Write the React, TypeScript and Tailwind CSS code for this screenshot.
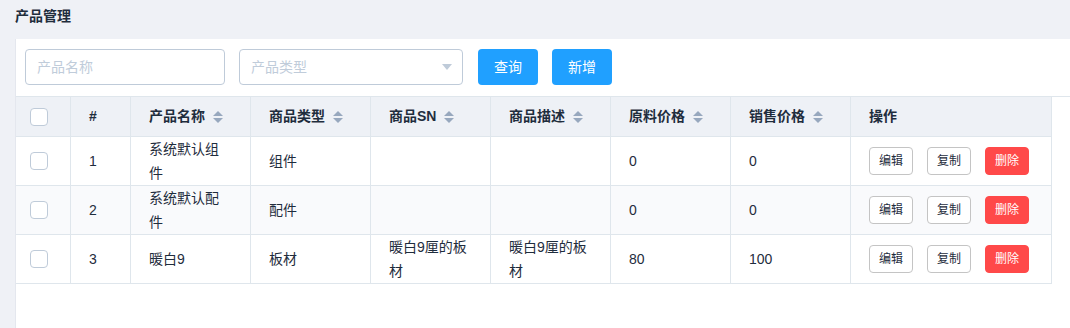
import React from "react";

const COLS = "grid-cols-[55px_60px_120px_120px_120px_120px_120px_120px_201px]";

type Row = {
  id: number;
  name: string;
  type: string;
  sn: string;
  desc: string;
  cost: string;
  price: string;
};

const ROWS: Row[] = [
  { id: 1, name: "系统默认组件", type: "组件", sn: "", desc: "", cost: "0", price: "0" },
  { id: 2, name: "系统默认配件", type: "配件", sn: "", desc: "", cost: "0", price: "0" },
  { id: 3, name: "暖白9", type: "板材", sn: "暖白9厘的板材", desc: "暖白9厘的板材", cost: "80", price: "100" },
];

function SortCaret() {
  return (
    <svg width="10" height="12" viewBox="0 0 10 12" className="ml-[8px] shrink-0">
      <polygon points="0,5 5,0 10,5" fill="#97a8be" />
      <polygon points="0,7 10,7 5,12" fill="#97a8be" />
    </svg>
  );
}

function Checkbox() {
  return <div className="h-[18px] w-[18px] rounded-[4px] border border-[#bfcbd9] bg-white" />;
}

function HeadCell({ label, sort }: { label: string; sort?: boolean }) {
  return (
    <div className="flex h-[40px] items-center border-r border-b border-[#dfe6ec] pl-[18px] text-[14px] font-bold text-[#1f2d3d]">
      <span>{label}</span>
      {sort && <SortCaret />}
    </div>
  );
}

function Cell({ children }: { children?: React.ReactNode }) {
  return (
    <div className="flex h-[49px] items-center border-r border-b border-[#dfe6ec] pl-[18px] pr-[22px] text-[14px] leading-[24px] text-[#1f2d3d]">
      <div className="break-all">{children}</div>
    </div>
  );
}

function SmallBtn({ label, danger }: { label: string; danger?: boolean }) {
  return (
    <button
      className={
        danger
          ? "h-[28px] rounded-[4px] border border-[#ff4949] bg-[#ff4949] px-[9px] text-[12px] text-white"
          : "h-[28px] rounded-[4px] border border-[#c4c4c4] bg-white px-[9px] text-[12px] text-[#1f2d3d]"
      }
    >
      {label}
    </button>
  );
}

export default function App() {
  return (
    <div
      className="min-h-[328px] bg-[#eff1f6]"
      style={{ fontFamily: '"Liberation Sans", "Noto Sans CJK SC", sans-serif' }}
    >
      <div className="flex h-[39px] items-start px-[15px] pt-[6px] text-[14px] font-bold text-[#1f2d3d]">
        产品管理
      </div>

      <div className="ml-[15px] min-h-[289px] border-l border-[#e4e7ee] bg-white">
        {/* search bar */}
        <div className="flex items-center gap-[14px] px-[9px] pt-[10px] pb-[11px]">
          <div className="flex h-[36px] w-[200px] items-center rounded-[4px] border border-[#bfcbd9] px-[11px] text-[14px] text-[#c0ccda]">
            产品名称
          </div>
          <div className="flex h-[36px] w-[224px] items-center justify-between rounded-[4px] border border-[#bfcbd9] pl-[11px] pr-[10px] text-[14px] text-[#c0ccda]">
            <span>产品类型</span>
            <svg width="10" height="6" viewBox="0 0 10 6">
              <polygon points="0,0 10,0 5,6" fill="#bfcbd9" />
            </svg>
          </div>
          <button className="ml-[1px] h-[36px] w-[60px] rounded-[4px] bg-[#20a0ff] text-[14px] text-white">
            查询
          </button>
          <button className="h-[36px] w-[60px] rounded-[4px] bg-[#20a0ff] text-[14px] text-white">
            新增
          </button>
        </div>

        {/* table */}
        <div className="border-t border-[#dfe6ec]">
          <div className={`grid w-[1036px] ${COLS} bg-[#eef1f6]`}>
            <div className="flex h-[40px] items-center border-r border-b border-[#dfe6ec] pl-[14px]">
              <Checkbox />
            </div>
            <HeadCell label="#" />
            <HeadCell label="产品名称" sort />
            <HeadCell label="商品类型" sort />
            <HeadCell label="商品SN" sort />
            <HeadCell label="商品描述" sort />
            <HeadCell label="原料价格" sort />
            <HeadCell label="销售价格" sort />
            <HeadCell label="操作" />
          </div>

          {ROWS.map((r, i) => (
            <div
              key={r.id}
              className={`grid w-[1036px] ${COLS} ${i % 2 === 1 ? "bg-[#f9fafc]" : "bg-white"}`}
            >
              <div className="flex h-[49px] items-center border-r border-b border-[#dfe6ec] pl-[14px]">
                <Checkbox />
              </div>
              <Cell>{r.id}</Cell>
              <Cell>{r.name}</Cell>
              <Cell>{r.type}</Cell>
              <Cell>{r.sn}</Cell>
              <Cell>{r.desc}</Cell>
              <Cell>{r.cost}</Cell>
              <Cell>{r.price}</Cell>
              <div className="flex h-[49px] items-center gap-[14px] border-r border-b border-[#dfe6ec] pl-[18px]">
                <SmallBtn label="编辑" />
                <SmallBtn label="复制" />
                <SmallBtn label="删除" danger />
              </div>
            </div>
          ))}
        </div>
      </div>
    </div>
  );
}
